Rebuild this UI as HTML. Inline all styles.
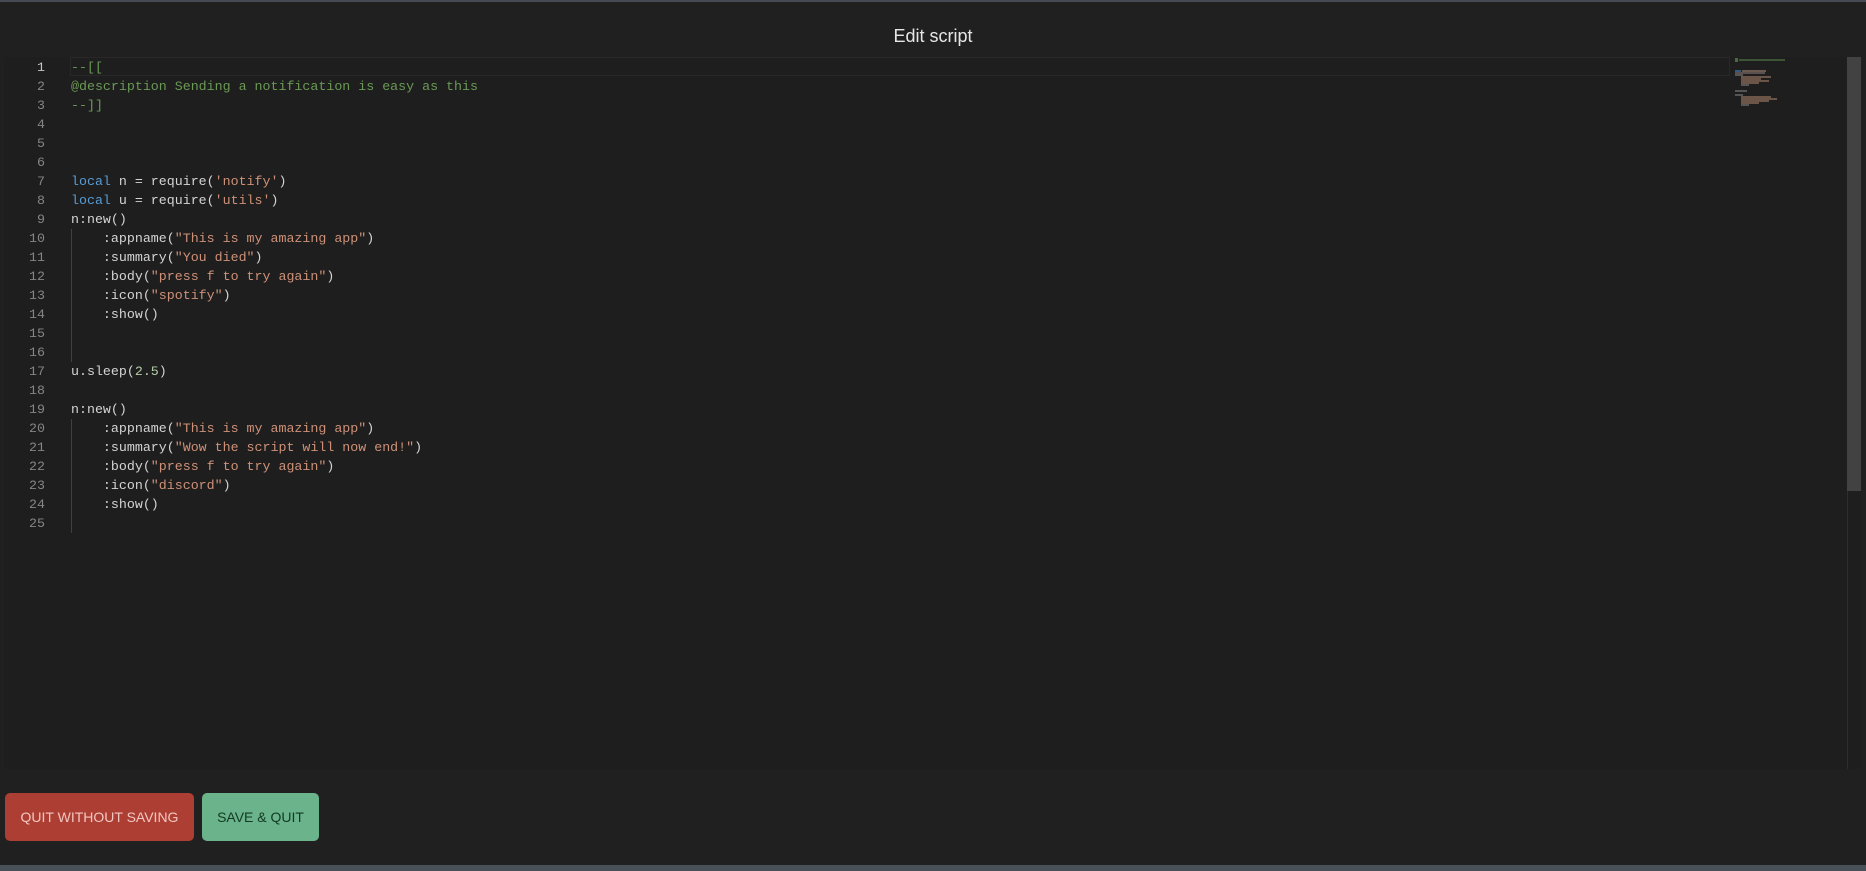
<!DOCTYPE html>
<html><head><meta charset="utf-8"><style>
*{margin:0;padding:0;box-sizing:border-box}
body{width:1866px;height:871px;background:#202020;position:relative;overflow:hidden;font-family:"Liberation Sans",sans-serif}
.top{position:absolute;left:0;top:0;width:1866px;height:2px;background:#474a55}
.title{position:absolute;left:0;width:1866px;top:26px;text-align:center;color:#e6e6e6;font-size:18px}
.ed{position:absolute;left:4px;top:57px;width:1857px;height:712px;background:#1e1e1e}
.code{position:absolute;left:0;top:1px;font-family:"Liberation Mono",monospace;font-size:13.3px;line-height:19px;color:#d4d4d4}
.ln{position:absolute;left:0;width:41px;text-align:right;color:#858585}
.tx{position:absolute;left:67px;top:0;white-space:pre}
.k{color:#569cd6}.c{color:#6a9955}.s{color:#ce9178}.n{color:#b5cea8}
.cur{position:absolute;left:66px;top:0;width:1660px;height:19px;border:1px solid #282828}
.guide{position:absolute;left:67px;width:1px;background:#404040}
.sb{position:absolute;left:1843px;top:0;width:14px;height:434px;background:#424242}
.sbl{position:absolute;left:1843px;top:0;width:1px;height:712px;background:#2e2e2e}
.mm div{position:absolute;height:2px}
.btn{position:absolute;top:793px;height:48px;border-radius:5px;font-size:14px;text-align:center;line-height:48px}
.bar{position:absolute;left:0;top:865px;width:1866px;height:6px;background:#4a5058}
</style></head><body>
<div class="top"></div>
<div class="title">Edit script</div>
<div class="ed">
<div class="cur"></div>
<div class="guide" style="top:172px;height:133px"></div>
<div class="guide" style="top:362px;height:114px"></div>
<div class="code"><div class="ln" style="top:0;color:#c6c6c6">1</div><div class="ln" style="top:19px">2</div><div class="ln" style="top:38px">3</div><div class="ln" style="top:57px">4</div><div class="ln" style="top:76px">5</div><div class="ln" style="top:95px">6</div><div class="ln" style="top:114px">7</div><div class="ln" style="top:133px">8</div><div class="ln" style="top:152px">9</div><div class="ln" style="top:171px">10</div><div class="ln" style="top:190px">11</div><div class="ln" style="top:209px">12</div><div class="ln" style="top:228px">13</div><div class="ln" style="top:247px">14</div><div class="ln" style="top:266px">15</div><div class="ln" style="top:285px">16</div><div class="ln" style="top:304px">17</div><div class="ln" style="top:323px">18</div><div class="ln" style="top:342px">19</div><div class="ln" style="top:361px">20</div><div class="ln" style="top:380px">21</div><div class="ln" style="top:399px">22</div><div class="ln" style="top:418px">23</div><div class="ln" style="top:437px">24</div><div class="ln" style="top:456px">25</div><div class="tx"><span class="c">--[[
@description Sending a notification is easy as this
--]]</span>



<span class="k">local</span> n = require(<span class="s">'notify'</span>)
<span class="k">local</span> u = require(<span class="s">'utils'</span>)
n:new()
    :appname(<span class="s">"This is my amazing app"</span>)
    :summary(<span class="s">"You died"</span>)
    :body(<span class="s">"press f to try again"</span>)
    :icon(<span class="s">"spotify"</span>)
    :show()


u.sleep(<span class="n">2.5</span>)

n:new()
    :appname(<span class="s">"This is my amazing app"</span>)
    :summary(<span class="s">"Wow the script will now end!"</span>)
    :body(<span class="s">"press f to try again"</span>)
    :icon(<span class="s">"discord"</span>)
    :show()</div></div>
<div class="mm">
<div style="left:1731px;top:1px;width:3px;height:4px;background:#4a6a40"></div>
<div style="left:1735px;top:2px;width:46px;background:#3d5535"></div>
<div style="left:1731px;top:13px;width:6px;background:#355a80"></div>
<div style="left:1738px;top:13px;width:24px;background:#6b5a50"></div>
<div style="left:1731px;top:15px;width:30px;background:#5a5050"></div>
<div style="left:1731px;top:17px;width:8px;background:#555"></div>
<div style="left:1737px;top:19px;width:30px;background:#6b5548"></div>
<div style="left:1737px;top:21px;width:20px;background:#6b5548"></div>
<div style="left:1737px;top:23px;width:28px;background:#6b5548"></div>
<div style="left:1737px;top:25px;width:18px;background:#6b5548"></div>
<div style="left:1737px;top:27px;width:8px;background:#555"></div>
<div style="left:1731px;top:33px;width:12px;background:#555"></div>
<div style="left:1731px;top:37px;width:8px;background:#555"></div>
<div style="left:1737px;top:39px;width:30px;background:#6b5548"></div>
<div style="left:1737px;top:41px;width:36px;background:#6b5548"></div>
<div style="left:1737px;top:43px;width:28px;background:#6b5548"></div>
<div style="left:1737px;top:45px;width:18px;background:#6b5548"></div>
<div style="left:1737px;top:47px;width:8px;background:#555"></div>
</div>
<div class="sbl"></div>
<div class="sb"></div>
</div>
<div class="btn" style="left:5px;width:189px;background:#ad3e33;color:#f2c6c0">QUIT WITHOUT SAVING</div>
<div class="btn" style="left:202px;width:117px;background:#6bb38a;color:#123a22">SAVE &amp; QUIT</div>
<div class="bar"></div>
</body></html>
